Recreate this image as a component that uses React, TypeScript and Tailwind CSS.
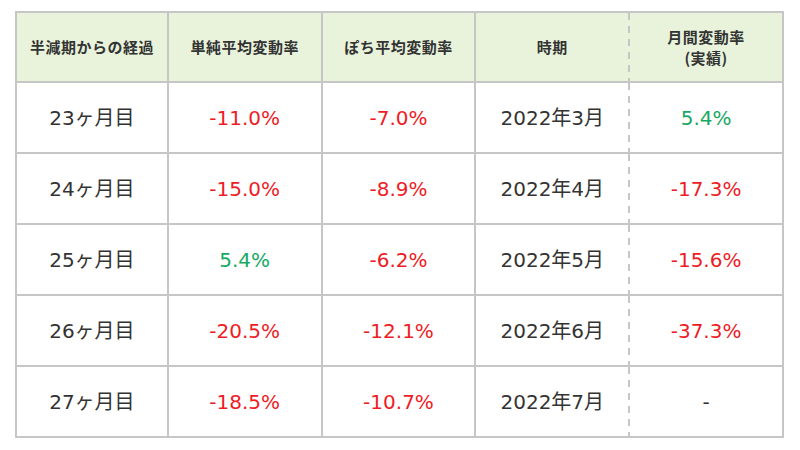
type Cell = { text: string; tone?: "red" | "green" };

const headers = ["半減期からの経過", "単純平均変動率", "ぽち平均変動率", "時期"];

const rows: Cell[][] = [
  [{ text: "23ヶ月目" }, { text: "-11.0%", tone: "red" }, { text: "-7.0%", tone: "red" }, { text: "2022年3月" }, { text: "5.4%", tone: "green" }],
  [{ text: "24ヶ月目" }, { text: "-15.0%", tone: "red" }, { text: "-8.9%", tone: "red" }, { text: "2022年4月" }, { text: "-17.3%", tone: "red" }],
  [{ text: "25ヶ月目" }, { text: "5.4%", tone: "green" }, { text: "-6.2%", tone: "red" }, { text: "2022年5月" }, { text: "-15.6%", tone: "red" }],
  [{ text: "26ヶ月目" }, { text: "-20.5%", tone: "red" }, { text: "-12.1%", tone: "red" }, { text: "2022年6月" }, { text: "-37.3%", tone: "red" }],
  [{ text: "27ヶ月目" }, { text: "-18.5%", tone: "red" }, { text: "-10.7%", tone: "red" }, { text: "2022年7月" }, { text: "-" }],
];

function toneClass(tone?: "red" | "green") {
  if (tone === "red") return "text-[#ee1c25]";
  if (tone === "green") return "text-[#17a864]";
  return "text-[#333333]";
}

// dashed divider between 時期 and 月間変動率
const dashed =
  "bg-[repeating-linear-gradient(to_bottom,#c6c6c6_0_7px,transparent_7px_13px)] bg-[length:2px_100%] bg-right bg-no-repeat";

export default function App() {
  return (
    <div className="w-[800px] h-[450px] bg-white pt-[11px] pl-[15px] font-['DejaVu_Sans','Noto_Sans_CJK_JP',sans-serif]">
      <table className="w-[769px] table-fixed border-separate border-spacing-0">
        <thead>
          <tr className="h-[72px] bg-[#e9f3db]">
            {headers.map((h, i) => (
              <th
                key={h}
                className={
                  "border-t-2 border-b-2 border-[#c6c6c6] text-center align-middle text-[15px] font-bold tracking-[0.5px] text-[#333333] font-['Noto_Sans_CJK_JP',sans-serif] " +
                  (i === 0 ? "border-l-2 " : "") +
                  (i === 3 ? "pr-[2px] " + dashed : "border-r-2")
                }
              >
                {h}
              </th>
            ))}
            <th className="border-t-2 border-b-2 border-r-2 border-[#c6c6c6] text-center align-middle text-[15px] leading-[21px] font-bold tracking-[0.5px] text-[#333333] font-['Noto_Sans_CJK_JP',sans-serif]">
              <div>月間変動率</div>
              <div>(実績)</div>
            </th>
          </tr>
        </thead>
        <tbody>
          {rows.map((row, r) => (
            <tr key={r} className="h-[71px]">
              {row.map((c, i) => (
                <td
                  key={i}
                  className={
                    "border-b-2 border-[#c6c6c6] text-center align-middle text-[20px] " +
                    toneClass(c.tone) +
                    (i === 0 ? " border-l-2" : "") +
                    (i === 3 ? " pr-[2px] " + dashed : " border-r-2")
                  }
                >
                  {c.text}
                </td>
              ))}
            </tr>
          ))}
        </tbody>
      </table>
    </div>
  );
}
